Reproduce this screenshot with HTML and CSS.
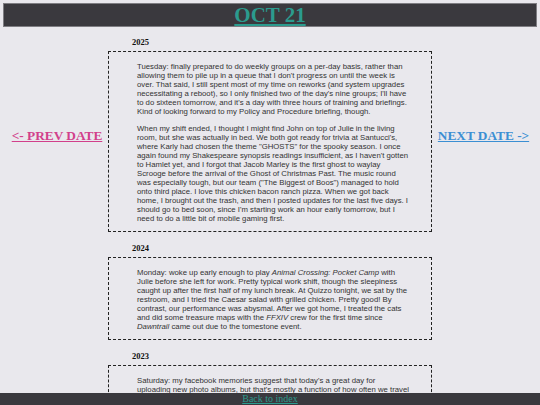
FILE: index.html
```html
<!DOCTYPE html>
<html lang="en">
<head>
    <meta charset="UTF-8">
    <meta name="viewport" content="width=device-width, initial-scale=1.0">
    <title>Oct 21</title>
    <link rel="stylesheet" href="styles.css">
</head>
<body>
    <div class="header">
        <h1><a href="#">OCT 21</a></h1>
    </div>

    <div class="layout">
        <div class="side side-left">
            <a class="nav-link prev" href="#">&lt;- PREV DATE</a>
        </div>

        <div class="entries">
            <div class="entry">
                <h3 class="year">2025</h3>
                <div class="entry-box">
                    <p>Tuesday: finally prepared to do weekly groups on a per-day basis, rather than allowing them to pile up in a queue that I don't progress on until the week is over. That said, I still spent most of my time on reworks (and system upgrades necessitating a reboot), so I only finished two of the day's nine groups; I'll have to do sixteen tomorrow, and it's a day with three hours of training and briefings. Kind of looking forward to my Policy and Procedure briefing, though.</p>
                    <p>When my shift ended, I thought I might find John on top of Julie in the living room, but she was actually in bed. We both got ready for trivia at Santucci's, where Karly had chosen the theme "GHOSTS" for the spooky season. I once again found my Shakespeare synopsis readings insufficient, as I haven't gotten to Hamlet yet, and I forgot that Jacob Marley is the first ghost to waylay Scrooge before the arrival of the Ghost of Christmas Past. The music round was especially tough, but our team ("The Biggest of Boos") managed to hold onto third place. I love this chicken bacon ranch pizza. When we got back home, I brought out the trash, and then I posted updates for the last five days. I should go to bed soon, since I'm starting work an hour early tomorrow, but I need to do a little bit of mobile gaming first.</p>
                </div>
            </div>

            <div class="entry">
                <h3 class="year">2024</h3>
                <div class="entry-box">
                    <p>Monday: woke up early enough to play <i>Animal Crossing: Pocket Camp</i> with Julie before she left for work. Pretty typical work shift, though the sleepiness caught up after the first half of my lunch break. At Quizzo tonight, we sat by the restroom, and I tried the Caesar salad with grilled chicken. Pretty good! By contrast, our performance was abysmal. After we got home, I treated the cats and did some treasure maps with the <i>FFXIV</i> crew for the first time since <i>Dawntrail</i> came out due to the tomestone event.</p>
                </div>
            </div>

            <div class="entry">
                <h3 class="year">2023</h3>
                <div class="entry-box">
                    <p>Saturday: my facebook memories suggest that today's a great day for uploading new photo albums, but that's mostly a function of how often we travel around this time of year. Julie and I slept in, then spent the afternoon sorting through pictures and picking out the good ones.</p>
                </div>
            </div>
        </div>

        <div class="side side-right">
            <a class="nav-link next" href="#">NEXT DATE -&gt;</a>
        </div>
    </div>

    <div class="footer">
        <a href="#">Back to index</a>
    </div>
</body>
</html>
```

FILE: styles.css
```css
body {
    margin: 0;
    background: #e9e8ed;
    font-family: "Liberation Serif", "Times New Roman", serif;
    padding-bottom: 20px;
}

.header {
    margin: 3px 3px 0;
    background: #3a393e;
    border: 1px solid #7e7d82;
    text-align: center;
}

.header h1 {
    margin: 0;
    font-size: 21px;
    line-height: 22px;
}

.header a {
    color: #2b9b8e;
}

.layout {
    display: grid;
    grid-template-columns: 20% 60% 20%;
    padding-top: 10px;
}

.side {
    text-align: center;
    padding-top: 89px;
}

.side-left {
    padding-left: 6px;
}

.side-right {
    padding-right: 5px;
}

.nav-link {
    font-weight: bold;
    font-size: 13.3px;
}

.prev {
    color: #d2408b;
}

.next {
    color: #3b8fd3;
}

.entry {
    margin-bottom: 11px;
}

.year {
    margin: 0 0 4px 24px;
    font-size: 8.5px;
    color: #111;
}

.entry-box {
    border: 1px dashed #222;
    padding: 2px 21px 0 28px;
}

.entry-box p {
    margin: 8px 0;
    font-family: "Liberation Sans", Arial, sans-serif;
    font-size: 7.75px;
    line-height: 9px;
    color: #333;
}

.footer {
    position: fixed;
    left: 0;
    right: 0;
    bottom: 0;
    height: 12px;
    background: #3a393e;
    text-align: center;
    font-size: 10px;
    line-height: 12px;
}

.footer a {
    color: #2b9b8e;
}
```
